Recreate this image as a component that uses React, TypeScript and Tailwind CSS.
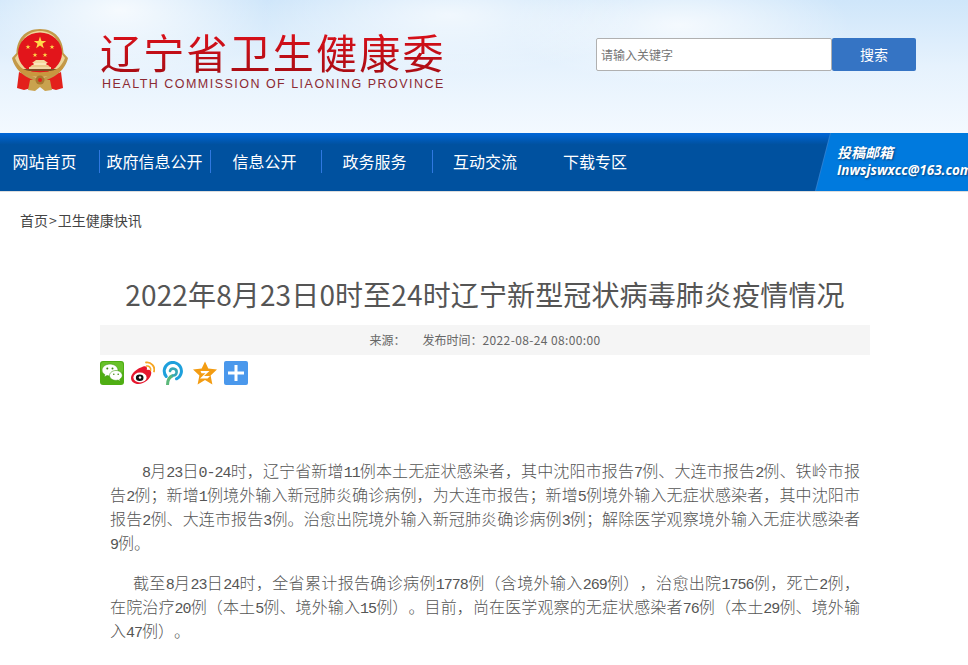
const navItems = [
  { label: "网站首页", cls: "pl-[1px] border-r border-[#2f78e0]" },
  { label: "政府信息公开", cls: "pr-[1px] border-r border-[#2f78e0]" },
  { label: "信息公开", cls: "pr-[3px] border-r border-[#2f78e0]" },
  { label: "政务服务", cls: "pr-[5px] border-r border-[#2f78e0]" },
  { label: "互动交流", cls: "pr-[7px]" },
  { label: "下载专区", cls: "pr-[9px]" },
];

const para1 =
  "8月23日0-24时，辽宁省新增11例本土无症状感染者，其中沈阳市报告7例、大连市报告2例、铁岭市报告2例；新增1例境外输入新冠肺炎确诊病例，为大连市报告；新增5例境外输入无症状感染者，其中沈阳市报告2例、大连市报告3例。治愈出院境外输入新冠肺炎确诊病例3例；解除医学观察境外输入无症状感染者9例。";
const para2 =
  "截至8月23日24时，全省累计报告确诊病例1778例（含境外输入269例），治愈出院1756例，死亡2例，在院治疗20例（本土5例、境外输入15例）。目前，尚在医学观察的无症状感染者76例（本土29例、境外输入47例）。";

// digits in the article are half-width, so they get a mono face squeezed to 8px advance
function Body({ text }: { text: string }) {
  const parts = text.split(/([0-9-]+)/);
  return (
    <>
      {parts.map((p, i) =>
        /^[0-9-]+$/.test(p) ? (
          <span key={i} className="font-['Liberation_Mono',monospace] text-[15px] tracking-[-1px] leading-[0]">
            {p}
          </span>
        ) : (
          <span key={i}>{p}</span>
        )
      )}
    </>
  );
}

function Star({ cx, cy, r, fill = "#ffd84a" }: { cx: number; cy: number; r: number; fill?: string }) {
  const pts: string[] = [];
  for (let i = 0; i < 10; i++) {
    const rad = i % 2 === 0 ? r : r * 0.4;
    const a = -Math.PI / 2 + (i * Math.PI) / 5;
    pts.push(`${cx + rad * Math.cos(a)},${cy + rad * Math.sin(a)}`);
  }
  return <polygon points={pts.join(" ")} fill={fill} />;
}

function Emblem() {
  return (
    <svg width="60" height="64" viewBox="0 0 60 64" className="shrink-0">
      {/* ribbons */}
      <path d="M9 44 L7 60 L14 62 L21 60 L24 50 Z" fill="#e3201b" />
      <path d="M51 44 L53 60 L46 62 L39 60 L36 50 Z" fill="#e3201b" />
      <path d="M20 52 H40 L42 62 L35 63 L30 59 L25 63 L18 62 Z" fill="#c9a24e" />
      {/* gold wreath */}
      <path d="M30 1 C14 1 7 12 6.5 25 L2 30 C4 39 12 50 30 54 C48 50 56 39 58 30 L53.5 25 C53 12 46 1 30 1 Z" fill="#c39a4a" />
      <path d="M30 3 C17 3 9.5 13 9 25 L5 30 C8 38 16 47 30 51 C44 47 52 38 55 30 L51 25 C50.5 13 43 3 30 3 Z" fill="#ecd69b" />
      <ellipse cx="30" cy="25" rx="22" ry="20.5" fill="#e2151b" />
      <Star cx={30} cy={15} r={6.5} />
      <Star cx={18} cy={19} r={2.6} />
      <Star cx={42} cy={19} r={2.6} />
      <Star cx={25} cy={27} r={2.6} />
      <Star cx={35} cy={27} r={2.6} />
      {/* gate */}
      <path d="M22 35 L26 32 H34 L38 35 Z" fill="#f3d9a0" />
      <rect x="23.5" y="35" width="13" height="2" fill="#fbe6bb" />
      <path d="M20 39 L22 37 H38 L40 39 Z" fill="#e9c98a" />
      <rect x="19" y="39" width="22" height="2" fill="#f1d8a6" />
      <rect x="12" y="41" width="36" height="2" fill="#7a4f24" />
      <path d="M7 36 C14 47 46 47 53 36 L53 40 C45 52 15 52 7 40 Z" fill="#c9973f" />
      <circle cx="30" cy="52" r="4.5" fill="#a9782f" />
      <circle cx="30" cy="52" r="2" fill="#e3201b" />
    </svg>
  );
}

function ShareIcons() {
  return (
    <div className="flex gap-[7px] mt-[6px]">
      <svg width="24" height="24" viewBox="0 0 24 24">
        <rect width="24" height="24" rx="3" fill="#4fae13" />
        <rect x="1" y="1" width="22" height="11" rx="3" fill="#68c22a" />
        <path d="M10 3 C5.8 3 2 5.8 2 9 C2 11 3.1 12.5 4.8 13.5 L4.2 16 L7 14.5 C8 14.8 9 15 10 15 C14.2 15 18 12.3 18 9 C18 5.8 14.2 3 10 3 Z" fill="#fff" stroke="#3f9a0f" strokeWidth="0.6" />
        <path d="M16 9.5 C12.5 9.5 9.5 11.8 9.5 14.5 C9.5 17.2 12.5 19.4 16 19.4 C16.7 19.4 17.4 19.3 18 19.1 L20.3 20.3 L19.7 18.2 C21.2 17.2 22.3 16 22.3 14.5 C22.3 11.8 19.5 9.5 16 9.5 Z" fill="#fff" stroke="#3f9a0f" strokeWidth="0.6" />
        <circle cx="7.3" cy="7.5" r="1" fill="#3f8a12" />
        <circle cx="12.5" cy="7.5" r="1" fill="#3f8a12" />
        <circle cx="13.8" cy="13.3" r="0.8" fill="#3f8a12" />
        <circle cx="18.2" cy="13.3" r="0.8" fill="#3f8a12" />
      </svg>
      <svg width="24" height="24" viewBox="0 0 24 24">
        <path d="M10 6.5 C14.5 4 16.8 5.5 15.8 9 C19 8.2 20.8 10 20.2 12.8 C19.4 18 13.5 23 7.5 23 C3.2 23 0 20.6 0 17 C0 13.2 4.5 8.5 10 6.5 Z" fill="#e6162d" />
        <ellipse cx="9" cy="16.5" rx="6.6" ry="5" fill="#fff" />
        <ellipse cx="8.7" cy="16.7" rx="3.8" ry="3.2" fill="#111" />
        <circle cx="9" cy="16.5" r="1.2" fill="#fff" />
        <path d="M15 1.5 C20 0.8 24.5 5.5 23 10.5" fill="none" stroke="#f5a623" strokeWidth="1.8" strokeLinecap="round" />
        <path d="M15.6 5 C18 4.5 20.3 7 19.6 9.5" fill="none" stroke="#f5a623" strokeWidth="1.5" strokeLinecap="round" />
      </svg>
      <svg width="24" height="24" viewBox="0 0 24 24">
        <path d="M5.5 24 C5.5 18.5 7.5 15.8 11 14.5" fill="none" stroke="#5cb87a" strokeWidth="3" />
        <path d="M4.2 15.5 A8.6 8.6 0 1 1 14.5 17.8" fill="none" stroke="#1ea0dc" strokeWidth="3" strokeLinecap="round" />
        <path d="M8 10 A3.4 3.4 0 1 1 11 14.5" fill="none" stroke="#35a7b5" strokeWidth="2.6" strokeLinecap="round" />
      </svg>
      <svg width="24" height="24" viewBox="0 0 24 24">
        <polygon points="12,0.5 15.3,7.6 24,8.6 17.6,14.4 19.4,23.5 12,19 4.6,23.5 6.4,14.4 0,8.6 8.7,7.6" fill="#f39c12" />
        <path d="M7.5 10 H16.5 L11 15 H17 L14.5 17.5 H7 L12.5 12.3 H8.5 Z" fill="#fff" />
      </svg>
      <svg width="24" height="24" viewBox="0 0 24 24">
        <rect width="24" height="24" rx="2" fill="#4a98ec" />
        <rect x="4" y="10.5" width="16" height="3" fill="#fff" />
        <rect x="10.5" y="4" width="3" height="16" fill="#fff" />
      </svg>
    </div>
  );
}

export default function App() {
  return (
    <div className="w-[968px] bg-white font-['Noto_Sans_CJK_SC','Liberation_Sans',sans-serif] overflow-hidden">
      {/* sky banner */}
      <header className="h-[133px] flex bg-[radial-gradient(ellipse_150px_70px_at_120px_10px,#ffffffcc,transparent),radial-gradient(ellipse_190px_60px_at_450px_15px,#ffffffaa,transparent),radial-gradient(ellipse_170px_60px_at_680px_25px,#ffffffbb,transparent),linear-gradient(to_bottom,#cfe6fa,#e6f2fd_50%,#f3f9ff)]">
        <div className="pl-[10px] pt-[28px]">
          <Emblem />
        </div>
        <div className="ml-[30px] pt-[25px] w-[350px]">
          <div className="text-[41px] leading-[52px] tracking-[2.2px] w-fit bg-[linear-gradient(to_bottom,#e3101a,#a50d14)] bg-clip-text text-transparent whitespace-nowrap">
            辽宁省卫生健康委
          </div>
          <div className="text-[12.5px] leading-[14px] tracking-[1.48px] text-[#8c2a33] font-['Liberation_Sans',sans-serif] ml-[2px] whitespace-nowrap">
            HEALTH COMMISSION OF LIAONING PROVINCE
          </div>
        </div>
        <div className="ml-[146px] mt-[38px] flex h-[33px]">
          <input
            placeholder="请输入关键字"
            className="w-[236px] h-[33px] bg-white border border-[#b0b0b0] rounded-[2px] px-1 text-[12px] outline-none placeholder:text-[#757575]"
          />
          <button className="w-[84px] h-[33px] bg-[#3574c4] text-white text-[14px] rounded-[2px]">搜索</button>
        </div>
      </header>

      {/* nav */}
      <nav className="h-[59px] border-b border-[#dddddd] flex bg-[linear-gradient(to_bottom,#0066d8,#00519f_20%,#00519f)] overflow-hidden">
        <ul className="flex ml-[-11px] items-center pb-[2px]">
          {navItems.map((item) => (
            <li
              key={item.label}
              className={`w-[111px] h-[23px] flex items-center justify-center text-white text-[16px] whitespace-nowrap ${item.cls}`}
            >
              {item.label}
            </li>
          ))}
        </ul>
        <div className="ml-auto w-[153px] h-full bg-[#2b7fd0] [clip-path:polygon(15px_0,100%_0,100%_100%,0_100%)]">
          <div className="ml-[1px] h-full bg-[#007ade] [clip-path:polygon(15px_0,100%_0,100%_100%,0_100%)] pl-[21px] pt-[10px] italic font-bold text-white [text-shadow:1px_1px_2px_#00427f] whitespace-nowrap">
            <div className="text-[14px] leading-[19px]">投稿邮箱</div>
            <div className="text-[13.5px] leading-[16px] font-['Open_Sans',sans-serif]">Inwsjswxcc@163.com</div>
          </div>
        </div>
      </nav>

      {/* breadcrumb */}
      <div className="pl-[20px] pt-[18px] text-[14px] leading-[20px] text-[#444444]">
        首页<span className="mx-[1px]">&gt;</span>卫生健康快讯
      </div>

      {/* article */}
      <main className="px-[100px] w-[970px]">
        <h1 className="mt-[44px] text-center text-[28px] leading-[40px] tracking-[0.13px] text-[#555555] whitespace-nowrap">
          2022年8月23日0时至24时辽宁新型冠状病毒肺炎疫情情况
        </h1>
        <div className="mt-[11px] h-[30px] bg-[#f5f5f5] flex items-center justify-center text-[12px] text-[#666666] [text-spacing-trim:space-all]">
          <span>来源：</span>
          <span className="ml-[17px]">
            发布时间：<span className="tracking-[0.37px]">2022-08-24 08:00:00</span>
          </span>
        </div>
        <ShareIcons />
        <div className="mt-[73px] pl-[10px] w-[760px] text-[16px] leading-[24px] text-[#555555] font-light text-justify [text-spacing-trim:space-all]">
          <p className="indent-[32px]">
            <Body text={para1} />
          </p>
          <p className="mt-[16px] indent-[23px]">
            <Body text={para2} />
          </p>
        </div>
      </main>
    </div>
  );
}
